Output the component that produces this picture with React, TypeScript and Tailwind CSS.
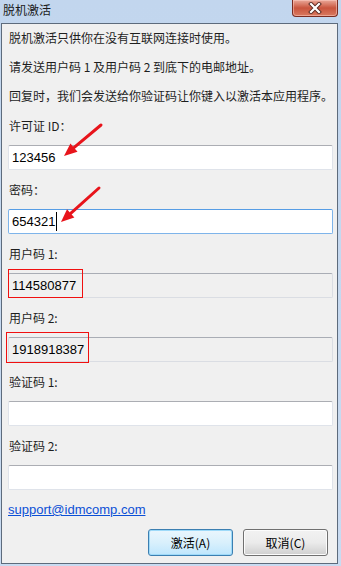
import React from "react";

void React;

const cjk = { fontFamily: '"Noto Sans CJK SC", "Noto Sans", sans-serif' };
const latin = { fontFamily: '"Liberation Sans", "Noto Sans CJK SC", sans-serif' };

function Label({ text }: { text: string }) {
  return (
    <div className="h-[20px] pl-[7px] text-[12px] leading-[20px] text-[#1e1e1e]" style={cjk}>
      {text}
    </div>
  );
}

function Field({
  value,
  variant = "edit",
  caret = false,
}: {
  value?: string;
  variant?: "edit" | "focus" | "readonly";
  caret?: boolean;
}) {
  const border =
    variant === "focus"
      ? "border-[#7eb4ea] border-t-[#569de5] bg-white"
      : variant === "readonly"
        ? "border-[#dadde3] border-t-[#a9adb5] bg-[#f0f0f0]"
        : "border-[#dfe3ea] border-t-[#abadb3] bg-white";
  return (
    <div
      className={`ml-[6px] mt-[9px] flex h-[25px] w-[325px] items-center rounded-[2px] border pl-[3px] text-[13px] text-black ${border}`}
      style={latin}
    >
      {value}
      {caret && <span className="ml-[1px] inline-block h-[19px] w-[1px] bg-black" />}
    </div>
  );
}

function Group({
  label,
  value,
  variant,
  caret,
}: {
  label: string;
  value?: string;
  variant?: "edit" | "focus" | "readonly";
  caret?: boolean;
}) {
  return (
    <div className="mb-[10px] flex flex-col">
      <Label text={label} />
      <Field value={value} variant={variant} caret={caret} />
    </div>
  );
}

function Arrow({ x1, y1, x2, y2 }: { x1: number; y1: number; x2: number; y2: number }) {
  const a = Math.atan2(y2 - y1, x2 - x1);
  const len = 13;
  const w = 5.5;
  const bx = x2 - len * Math.cos(a);
  const by = y2 - len * Math.sin(a);
  const px = -Math.sin(a) * w;
  const py = Math.cos(a) * w;
  return (
    <g>
      <line x1={x1} y1={y1} x2={bx} y2={by} stroke="#e8141b" strokeWidth={3} strokeLinecap="round" />
      <polygon
        points={`${x2},${y2} ${bx + px},${by + py} ${bx - px},${by - py}`}
        fill="#e8141b"
      />
    </g>
  );
}

export default function App() {
  return (
    <div className="relative h-[566px] w-[341px] overflow-hidden bg-gradient-to-b from-[#c2d6ee] to-[#c9dbf1]">
      {/* title bar */}
      <div className="flex h-[23px] items-start justify-between">
        <div className="pl-[3px] pt-[2px] text-[12px] leading-[16px] text-[#1b1b1b]" style={cjk}>
          脱机激活
        </div>
        <div className="mr-[3px] flex h-[17px] w-[46px] items-center justify-center rounded-b-[4px] border border-t-0 border-[#7a2c21] bg-gradient-to-b from-[#e9a899] via-[#c9543d] to-[#d9795f] shadow-[inset_0_0_0_1px_rgba(255,210,200,0.5)]">
          <svg width="14" height="12" viewBox="0 0 14 12">
            <path d="M3 2 L11 10 M11 2 L3 10" stroke="#5a2a22" strokeWidth="4" strokeLinecap="square" />
            <path d="M3 2 L11 10 M11 2 L3 10" stroke="#ffffff" strokeWidth="2.2" strokeLinecap="square" />
          </svg>
        </div>
      </div>

      {/* client area */}
      <div className="ml-[1px] flex h-[541px] w-[337px] flex-col border border-[#5d6b7c] bg-[#f0f0f0]">
        <div className="mt-[4px] flex flex-col gap-[9px]">
          <Label text="脱机激活只供你在没有互联网连接时使用。" />
          <Label text="请发送用户码 1 及用户码 2 到底下的电邮地址。" />
          <Label text="回复时，我们会发送给你验证码让你键入以激活本应用程序。" />
        </div>
        <div className="mt-[10px] flex flex-col">
          <Group label="许可证 ID：" value="123456" />
          <Group label="密码：" value="654321" variant="focus" caret />
          <Group label="用户码 1:" value="114580877" variant="readonly" />
          <Group label="用户码 2:" value="1918918387" variant="readonly" />
          <Group label="验证码 1:" />
          <Group label="验证码 2:" />
        </div>
        <div className="-mt-[1px] h-[20px] pl-[6px] text-[13px] leading-[20px]">
          <a href="#" className="text-[#0b4fd6] underline" style={latin}>
            support@idmcomp.com
          </a>
        </div>
        <div className="mt-[10px] flex justify-end gap-[10px] pr-[9px]">
          <button
            className="h-[27px] w-[85px] rounded-[3px] border border-[#3c7fb1] bg-gradient-to-b from-[#eaf6fd] via-[#d9f0fc] to-[#bee6fd] text-[12px] text-black shadow-[inset_0_0_0_1px_#9edaf9]"
            style={cjk}
          >
            激活(A)
          </button>
          <button
            className="h-[27px] w-[85px] rounded-[3px] border border-[#707070] bg-gradient-to-b from-[#f2f2f2] via-[#ebebeb] to-[#cfcfcf] text-[12px] text-black shadow-[inset_0_0_0_1px_#fcfcfc]"
            style={cjk}
          >
            取消(C)
          </button>
        </div>
      </div>

      {/* annotations */}
      <div className="pointer-events-none absolute left-[8px] top-[269px] h-[29px] w-[75px] border border-[#f01010]" />
      <div className="pointer-events-none absolute left-[6px] top-[332px] h-[31px] w-[83px] border border-[#f01010]" />
      <svg className="pointer-events-none absolute left-0 top-0" width="341" height="566">
        <Arrow x1={101} y1={125} x2={64} y2={156} />
        <Arrow x1={99} y1={188} x2={61} y2={222} />
      </svg>
    </div>
  );
}
